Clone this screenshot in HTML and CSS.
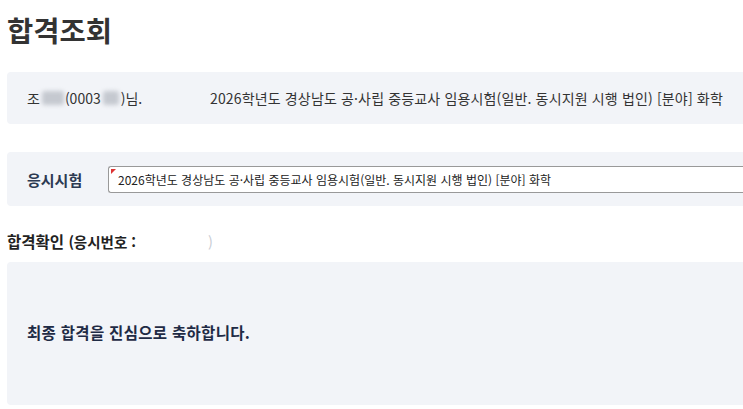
FILE: index.html
```html
<!DOCTYPE html>
<html lang="ko">
<head>
<meta charset="utf-8">
<link rel="stylesheet" href="styles.css">
</head>
<body>
<div class="page">
  <h1 class="title">합격조회</h1>
  <div class="box info">
    <span class="name">조<span class="blur b1"></span>(0003<span class="blur b2"></span>)님.</span>
    <span class="exam">2026학년도 경상남도 공·사립 중등교사 임용시험(일반. 동시지원 시행 법인) [분야] 화학</span>
  </div>
  <div class="box select">
    <span class="label">응시시험</span>
    <div class="input"><span class="mark"></span>2026학년도 경상남도 공·사립 중등교사 임용시험(일반. 동시지원 시행 법인) [분야] 화학</div>
  </div>
  <h2 class="sub">합격확인 <span class="paren">(응시번호 :<span class="wblur"></span><span class="faint">)</span></span></h2>
  <div class="box result">
    <p class="msg">최종 합격을 진심으로 축하합니다.</p>
  </div>
</div>
</body>
</html>
```
FILE: styles.css
```css
html, body {
  margin: 0;
  padding: 0;
  background: #fff;
  overflow: hidden;
}
body {
  font-family: "Noto Sans CJK KR", "Noto Sans", sans-serif;
  color: #333;
}
.page {
  width: 780px;
  padding: 0 0 0 7px;
}
.title {
  margin: 0;
  padding-top: 10px;
  height: 72px;
  box-sizing: border-box;
  font-size: 28.5px;
  line-height: 40px;
  font-weight: 700;
  color: #333;
}
.box {
  background: #f2f4f8;
  border-radius: 4px;
  box-sizing: border-box;
  display: flex;
  align-items: center;
  padding-left: 20px;
}
.info {
  height: 52px;
  font-size: 14px;
  color: #333;
}
.name {
  width: 183px;
  display: inline-flex;
  align-items: center;
}
.blur {
  display: inline-block;
  height: 14px;
  background: #c5c9d0;
  filter: blur(2px);
  border-radius: 3px;
}
.b1 { width: 22px; margin: 0 1px 0 2px; }
.b2 { width: 16px; margin: 0 2px; }
.exam {
  color: #333;
  letter-spacing: 0.15px;
}
.select {
  margin-top: 28px;
  height: 54px;
}
.label {
  width: 81px;
  font-size: 15px;
  font-weight: 700;
  color: #2c3a52;
}
.input {
  position: relative;
  flex: 1;
  height: 27px;
  box-sizing: border-box;
  border: 1px solid #999;
  border-right: none;
  border-radius: 3px 0 0 3px;
  background: #fff;
  font-size: 12px;
  line-height: 25px;
  padding-left: 9px;
  color: #222;
}
.mark {
  position: absolute;
  left: 2px;
  top: 2px;
  width: 0;
  height: 0;
  border-top: 5px solid #d33;
  border-right: 5px solid transparent;
}
.sub {
  margin: 0;
  height: 56px;
  box-sizing: border-box;
  padding-top: 24px;
  font-size: 15.5px;
  line-height: 22px;
  font-weight: 700;
  color: #222;
}
.paren {
  font-size: 14.5px;
}
.wblur {
  display: inline-block;
  width: 72px;
  height: 14px;
}
.faint {
  color: #c8ccd4;
  font-weight: 400;
}
.result {
  height: 143px;
  padding-bottom: 4px;
}
.msg {
  margin: 0;
  font-size: 15.5px;
  letter-spacing: 0.3px;
  font-weight: 700;
  color: #1f2b45;
}
```
